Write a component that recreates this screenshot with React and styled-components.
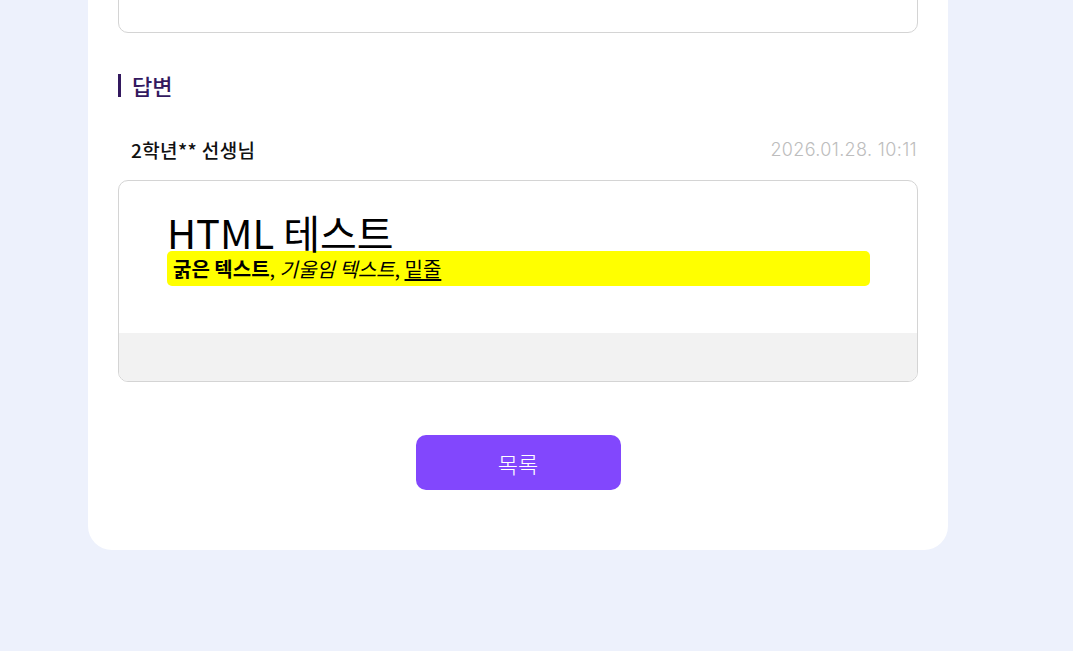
import styled, { createGlobalStyle } from 'styled-components';

const GlobalStyle = createGlobalStyle`
  body {
    margin: 0;
    background: #edf1fc;
    font-family: "Noto Sans CJK KR", "Noto Sans", sans-serif;
  }
`;

const Page = styled.div`
  padding-left: 88px;
  margin-top: -71px;
`;

const Panel = styled.div`
  width: 860px;
  box-sizing: border-box;
  background: #ffffff;
  border-radius: 0 0 24px 24px;
  padding: 30px 30px 60px;
  display: flex;
  flex-direction: column;
`;

const PrevCard = styled.div`
  border: 1px solid #d4d4d4;
  border-radius: 10px;
  padding: 17px 48px 31px;
  font-size: 16px;
  line-height: 24px;
  color: #111;
`;

const SectionTitle = styled.h2`
  margin: 41px 0 0;
  display: flex;
  align-items: center;
  gap: 11px;
  font-size: 22px;
  line-height: 23px;
  font-weight: 500;
  color: #33195f;

  &::before {
    content: '';
    width: 3px;
    height: 23px;
    background: #33195f;
  }
`;

const AuthorRow = styled.div`
  margin-top: 41px;
  padding: 0 1px 0 13px;
  display: flex;
  justify-content: space-between;
  align-items: center;
  line-height: 24px;
`;

const Author = styled.span`
  font-size: 19px;
  font-weight: 500;
  letter-spacing: 0.4px;
  color: #111;
`;

const DateText = styled.span`
  font-family: Inter, "Noto Sans", sans-serif;
  font-size: 18px;
  font-weight: 300;
  letter-spacing: 0.35px;
  color: #bdbdbd;
`;

const AnswerCard = styled.div`
  margin-top: 18px;
  border: 1px solid #d4d4d4;
  border-radius: 10px;
  overflow: hidden;
`;

const AnswerBody = styled.div`
  padding: 32px 47px 47px 48px;
`;

const Heading = styled.h1`
  margin: 0;
  font-size: 40px;
  line-height: 38px;
  font-weight: 400;
  color: #000;
`;

const Highlight = styled.div`
  background: #ffff00;
  border-radius: 5px;
  padding: 0 6px;
  font-size: 20px;
  line-height: 35px;
  color: #000;

  u {
    text-underline-offset: 2px;
  }
`;

const AnswerFooter = styled.div`
  height: 48px;
  background: #f2f2f2;
`;

const ListButton = styled.button`
  align-self: center;
  margin-top: 53px;
  width: 205px;
  height: 55px;
  border: none;
  border-radius: 10px;
  background: #8247fd;
  color: #fff;
  font-family: "Noto Sans CJK KR", sans-serif;
  font-size: 22px;
  font-weight: 300;
  cursor: pointer;
`;

export default function App() {
  return (
    <>
      <GlobalStyle />
      <Page>
        <Panel>
          <PrevCard>로그인 화면에서 비밀번호 찾기(page) 기능 오류가 있습니다 (y)</PrevCard>
          <SectionTitle>답변</SectionTitle>
          <AuthorRow>
            <Author>2학년** 선생님</Author>
            <DateText>2026.01.28. 10:11</DateText>
          </AuthorRow>
          <AnswerCard>
            <AnswerBody>
              <Heading>HTML 테스트</Heading>
              <Highlight>
                <b>굵은 텍스트</b>, <i>기울임 텍스트</i>, <u>밑줄</u>
              </Highlight>
            </AnswerBody>
            <AnswerFooter />
          </AnswerCard>
          <ListButton>목록</ListButton>
        </Panel>
      </Page>
    </>
  );
}
